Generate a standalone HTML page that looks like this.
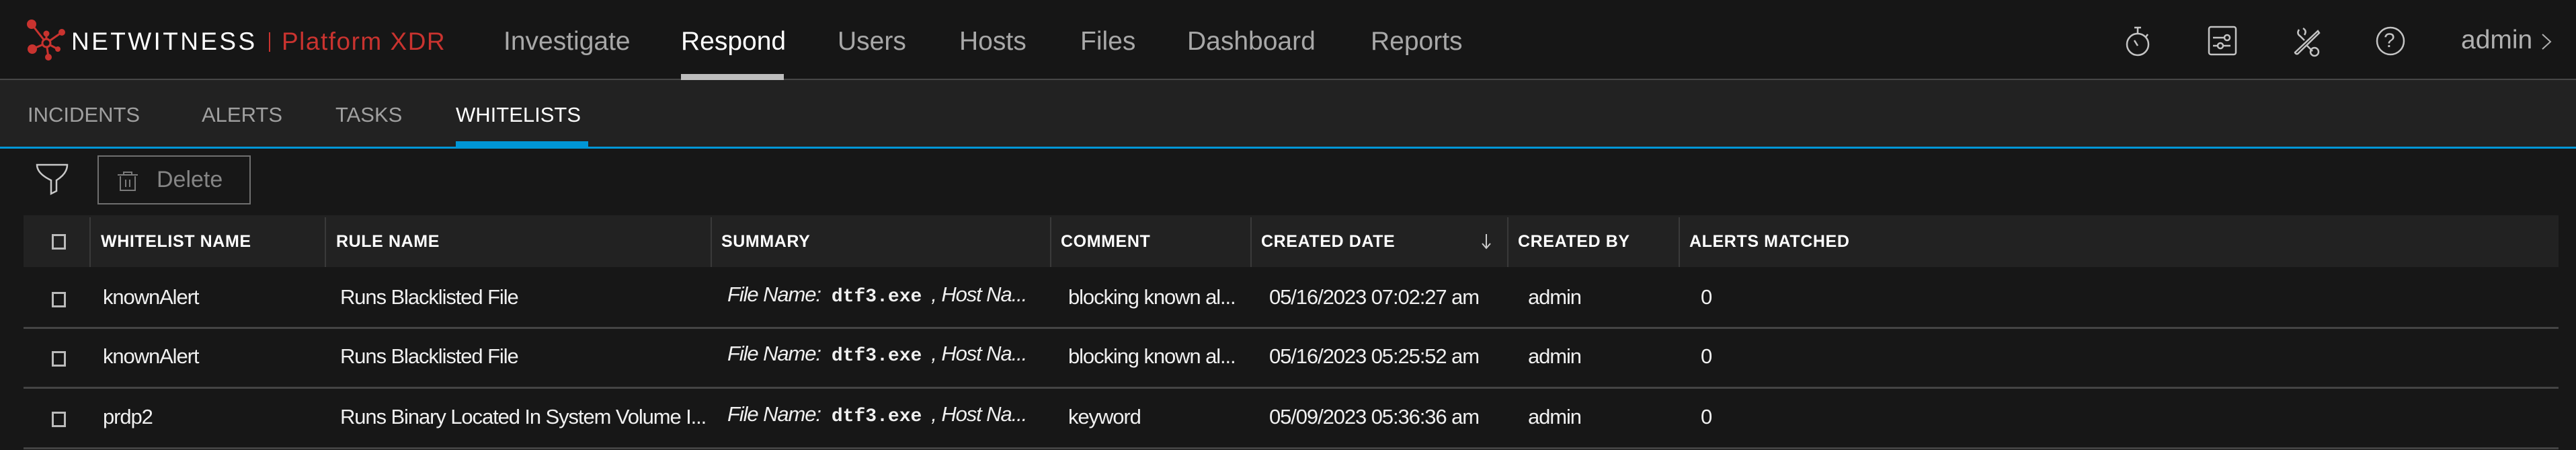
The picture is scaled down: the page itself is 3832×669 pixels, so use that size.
<!DOCTYPE html>
<html><head><meta charset="utf-8"><style>
*{margin:0;padding:0;box-sizing:border-box}
body{width:3832px;height:669px;background:#171717;font-family:"Liberation Sans",sans-serif;position:relative;overflow:hidden;color:#fff}
.a{position:absolute;white-space:nowrap}
.nav{font-size:39px;color:#a8a8a8;top:38px;line-height:48px}
.sub{font-size:31px;color:#a0a0a0;top:152px;line-height:38px}
.th{font-size:25px;font-weight:bold;color:#fff;top:345px;line-height:28px;letter-spacing:0.6px}
.td{font-size:31px;color:#f0f0f0;letter-spacing:-1.1px;line-height:36px}
.cb{position:absolute;width:21px;height:23px;border:3px solid #bbb;left:77px}
.sep{position:absolute;left:35px;width:3771px;height:3px;background:#444}
.vs{position:absolute;top:323px;width:2px;height:74px;background:#3a3a3a}
.it{font-style:italic}
.mono{font-family:"Liberation Mono",monospace;font-weight:bold;font-size:28px;letter-spacing:0;margin:0 14px 0 16px}
</style></head><body>
<div class="a" style="left:0;top:0;width:3832px;height:118px;background:#161616"></div>
<div class="a" style="left:0;top:117px;width:3832px;height:2px;background:#474747"></div>
<svg class="a" style="left:35px;top:24px" width="70" height="72" viewBox="35 24 70 72">
<g stroke="#c9332f" stroke-width="3" fill="none">
<line x1="47" y1="36" x2="69" y2="64"/><line x1="48" y1="73" x2="69" y2="64"/><line x1="92" y1="48" x2="69" y2="64"/><line x1="69" y1="50" x2="69" y2="64"/><line x1="86" y1="73" x2="69" y2="64"/><line x1="72" y1="85" x2="69" y2="64"/>
</g>
<g fill="#c9332f"><circle cx="47" cy="36" r="7"/><circle cx="48" cy="73" r="7"/><circle cx="92" cy="48" r="5"/><circle cx="69" cy="50" r="4.5"/><circle cx="86" cy="73" r="4"/><circle cx="72" cy="85" r="5"/></g>
<circle cx="69" cy="64" r="6" fill="#161616" stroke="#c9332f" stroke-width="3"/>
</svg>
<div class="a" style="left:106px;top:42px;font-size:37px;line-height:40px;color:#fff;letter-spacing:3.4px">NETWITNESS</div>
<div class="a" style="left:400px;top:48px;width:2px;height:29px;background:#c9332f"></div>
<div class="a" style="left:419px;top:42px;font-size:37px;line-height:40px;color:#c9332f;letter-spacing:1.5px">Platform XDR</div>
<div class="a nav" style="left:749px">Investigate</div>
<div class="a nav" style="left:1013px;color:#fff">Respond</div>
<div class="a" style="left:1013px;top:110px;width:153px;height:9px;background:#bdbdbd"></div>
<div class="a nav" style="left:1246px">Users</div>
<div class="a nav" style="left:1427px">Hosts</div>
<div class="a nav" style="left:1607px">Files</div>
<div class="a nav" style="left:1766px">Dashboard</div>
<div class="a nav" style="left:2039px">Reports</div>
<svg class="a" style="left:3150px;top:30px" width="660" height="60" viewBox="3150 30 660 60" fill="none" stroke="#c4c4c4" stroke-width="2.5">
<circle cx="3180" cy="66" r="16"/><line x1="3180" y1="41" x2="3180" y2="50"/><line x1="3175" y1="41" x2="3185" y2="41"/><line x1="3192" y1="55" x2="3195" y2="51"/><line x1="3175" y1="60" x2="3180" y2="68"/>
<rect x="3286" y="40" width="40" height="41" rx="3"/><line x1="3292" y1="56" x2="3316" y2="56"/><circle cx="3313" cy="56" r="4" fill="#161616"/><line x1="3292" y1="68" x2="3318" y2="68"/><circle cx="3303" cy="68" r="4" fill="#161616"/>
<path d="M3448 46 L3414 78 a3 3 0 0 0 4 2 L3450 49 Z"/><path d="M3420 44 q-4 6 2 10 l6 6 M3426 42 q6 4 2 10"/><path d="M3432 68 l8 8"/><circle cx="3443" cy="77" r="6"/>
<circle cx="3556" cy="61" r="20"/>
</svg>
<div class="a" style="left:3546px;top:43px;font-size:30px;color:#c4c4c4;line-height:36px">?</div>
<div class="a nav" style="left:3661px;top:36px;color:#b0b0b0">admin</div>
<svg class="a" style="left:3778px;top:48px" width="20" height="28"><polyline points="4,3 16,14 4,25" fill="none" stroke="#b0b0b0" stroke-width="2"/></svg>
<div class="a" style="left:0;top:119px;width:3832px;height:99px;background:#222"></div>
<div class="a" style="left:0;top:218px;width:3832px;height:3px;background:#0096d6"></div>
<div class="a" style="left:678px;top:210px;width:197px;height:9px;background:#0096d6"></div>
<div class="a sub" style="left:41px">INCIDENTS</div>
<div class="a sub" style="left:300px">ALERTS</div>
<div class="a sub" style="left:499px">TASKS</div>
<div class="a sub" style="left:678px;color:#fff">WHITELISTS</div>
<svg class="a" style="left:50px;top:240px" width="56" height="54" viewBox="50 240 56 54" fill="none" stroke="#c8c8c8" stroke-width="2.5">
<path d="M55 245 L100 245 Q100 258 84 268 L84 284 L76 288 L76 268 Q55 258 55 245 Z"/>
</svg>
<div class="a" style="left:145px;top:231px;width:228px;height:73px;border:2px solid #6f6f6f"></div>
<svg class="a" style="left:172px;top:252px" width="36" height="36" fill="none" stroke="#7a7a7a" stroke-width="2">
<line x1="3" y1="8" x2="33" y2="8"/><path d="M12 8 V4 H24 V8"/><path d="M7 10 V31 H29 V10"/><line x1="15" y1="15" x2="15" y2="26"/><line x1="21" y1="15" x2="21" y2="26"/>
</svg>
<div class="a" style="left:233px;top:247px;font-size:34px;color:#858585;line-height:40px">Delete</div>
<div class="a" style="left:35px;top:320px;width:3771px;height:77px;background:#222"></div>
<div class="vs" style="left:133px"></div><div class="vs" style="left:483px"></div><div class="vs" style="left:1057px"></div><div class="vs" style="left:1562px"></div><div class="vs" style="left:1860px"></div><div class="vs" style="left:2242px"></div><div class="vs" style="left:2497px"></div>
<div class="cb" style="top:348px"></div>
<div class="a th" style="left:150px">WHITELIST NAME</div>
<div class="a th" style="left:500px">RULE NAME</div>
<div class="a th" style="left:1073px">SUMMARY</div>
<div class="a th" style="left:1578px">COMMENT</div>
<div class="a th" style="left:1876px">CREATED DATE</div>
<svg class="a" style="left:2203px;top:346px" width="16" height="26" fill="none" stroke="#ccc" stroke-width="2"><line x1="8" y1="2" x2="8" y2="23"/><polyline points="2,16 8,23 14,16"/></svg>
<div class="a th" style="left:2258px">CREATED BY</div>
<div class="a th" style="left:2513px">ALERTS MATCHED</div>
<div class="sep" style="top:486px"></div><div class="sep" style="top:575px"></div><div class="sep" style="top:665px"></div>

<div class="cb" style="top:434px"></div>
<div class="a td" style="left:153px;top:424px">knownAlert</div>
<div class="a td" style="left:506px;top:424px">Runs Blacklisted File</div>
<div class="a td" style="left:1082px;top:420px"><span class="it">File Name:</span><span class="mono">dtf3.exe</span><span class="it">,  Host Na...</span></div>
<div class="a td" style="left:1589px;top:424px">blocking known al...</div>
<div class="a td" style="left:1888px;top:424px">05/16/2023 07:02:27 am</div>
<div class="a td" style="left:2273px;top:424px">admin</div>
<div class="a td" style="left:2530px;top:424px">0</div>

<div class="cb" style="top:522px"></div>
<div class="a td" style="left:153px;top:512px">knownAlert</div>
<div class="a td" style="left:506px;top:512px">Runs Blacklisted File</div>
<div class="a td" style="left:1082px;top:508px"><span class="it">File Name:</span><span class="mono">dtf3.exe</span><span class="it">,  Host Na...</span></div>
<div class="a td" style="left:1589px;top:512px">blocking known al...</div>
<div class="a td" style="left:1888px;top:512px">05/16/2023 05:25:52 am</div>
<div class="a td" style="left:2273px;top:512px">admin</div>
<div class="a td" style="left:2530px;top:512px">0</div>

<div class="cb" style="top:612px"></div>
<div class="a td" style="left:153px;top:602px">prdp2</div>
<div class="a td" style="left:506px;top:602px">Runs Binary Located In System Volume I...</div>
<div class="a td" style="left:1082px;top:598px"><span class="it">File Name:</span><span class="mono">dtf3.exe</span><span class="it">,  Host Na...</span></div>
<div class="a td" style="left:1589px;top:602px">keyword</div>
<div class="a td" style="left:1888px;top:602px">05/09/2023 05:36:36 am</div>
<div class="a td" style="left:2273px;top:602px">admin</div>
<div class="a td" style="left:2530px;top:602px">0</div>
</body></html>
